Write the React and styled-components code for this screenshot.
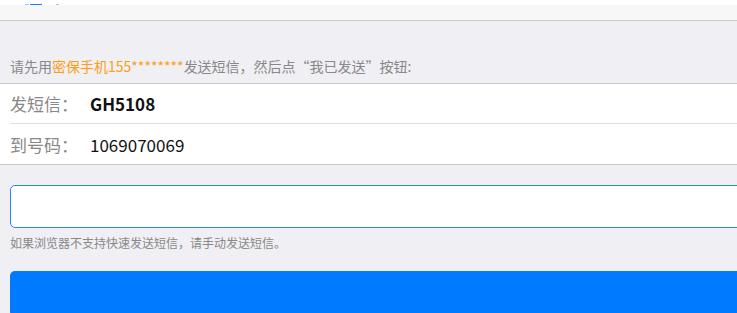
import React from 'react';
import styled, { createGlobalStyle } from 'styled-components';

const GlobalStyle = createGlobalStyle`
  html, body {
    margin: 0;
    padding: 0;
    background: #efeff4;
    overflow: hidden;
  }
  body {
    font-family: "Noto Sans CJK SC", "Microsoft YaHei", sans-serif;
  }
`;

const Page = styled.div`
  width: 780px;
  background: #efeff4;
`;

// top of the previous screen, mostly scrolled away
const TopStrip = styled.div`
  height: 5px;
  background: #ffffff;
  display: flex;
  align-items: flex-end;
  padding-left: 25px;
  gap: 1px;
`;

const TabMark = styled.span`
  display: block;
  height: 1px;
  width: ${({ w }) => w}px;
  margin-left: ${({ gap }) => gap || 0}px;
  background: ${({ light }) => (light ? '#9cc8ff' : '#1a7cf0')};
`;

const NavBar = styled.div`
  height: 15px;
  background: #f7f7f7;
  border-bottom: 1px solid #c8c7cc;
`;

const Tip = styled.p`
  margin: 0;
  padding: 35px 10px 7px;
  font-size: 14px;
  line-height: 20px;
  color: #888888;
  white-space: nowrap;
`;

const Highlight = styled.span`
  color: #ff9d12;
`;

const InfoList = styled.div`
  background: #ffffff;
  border-top: 1px solid #c8c7cc;
  border-bottom: 1px solid #c8c7cc;
  padding-left: 10px;
`;

const InfoRow = styled.div`
  display: flex;
  align-items: center;
  height: 40px;
  box-sizing: border-box;
  font-size: 17px;
  border-bottom: ${({ last }) => (last ? 'none' : '1px solid #e0e0e0')};
`;

const Label = styled.span`
  width: 80px;
  color: #888888;
`;

const Value = styled.span`
  color: #111111;
  font-weight: ${({ strong }) => (strong ? 700 : 400)};
`;

const Form = styled.div`
  padding: 20px 10px 0;
`;

const Input = styled.input`
  display: block;
  width: 100%;
  height: 43px;
  box-sizing: border-box;
  border: 1px solid #2a86ff;
  border-radius: 5px;
  background: #ffffff;
  outline: none;
  font-family: inherit;
  font-size: 16px;
  padding: 0 10px;
`;

const Help = styled.p`
  margin: 6px 0 0;
  font-size: 12px;
  line-height: 18px;
  color: #888888;
`;

const SentButton = styled.button`
  display: block;
  width: 100%;
  height: 46px;
  margin-top: 19px;
  border: none;
  border-radius: 5px;
  background: #007aff;
  color: #ffffff;
  font-family: inherit;
  font-size: 17px;
`;

export default function App() {
  return (
    <Page>
      <GlobalStyle />
      <TopStrip>
        <TabMark w={4} light />
        <TabMark w={12} />
        <TabMark w={3} gap={13} light />
      </TopStrip>
      <NavBar />
      <Tip>
        请先用<Highlight>密保手机155********</Highlight>发送短信，然后点“我已发送”按钮:
      </Tip>
      <InfoList>
        <InfoRow>
          <Label>发短信：</Label>
          <Value strong>GH5108</Value>
        </InfoRow>
        <InfoRow last>
          <Label>到号码：</Label>
          <Value>1069070069</Value>
        </InfoRow>
      </InfoList>
      <Form>
        <Input type="text" />
        <Help>如果浏览器不支持快速发送短信，请手动发送短信。</Help>
        <SentButton type="button" />
      </Form>
    </Page>
  );
}
